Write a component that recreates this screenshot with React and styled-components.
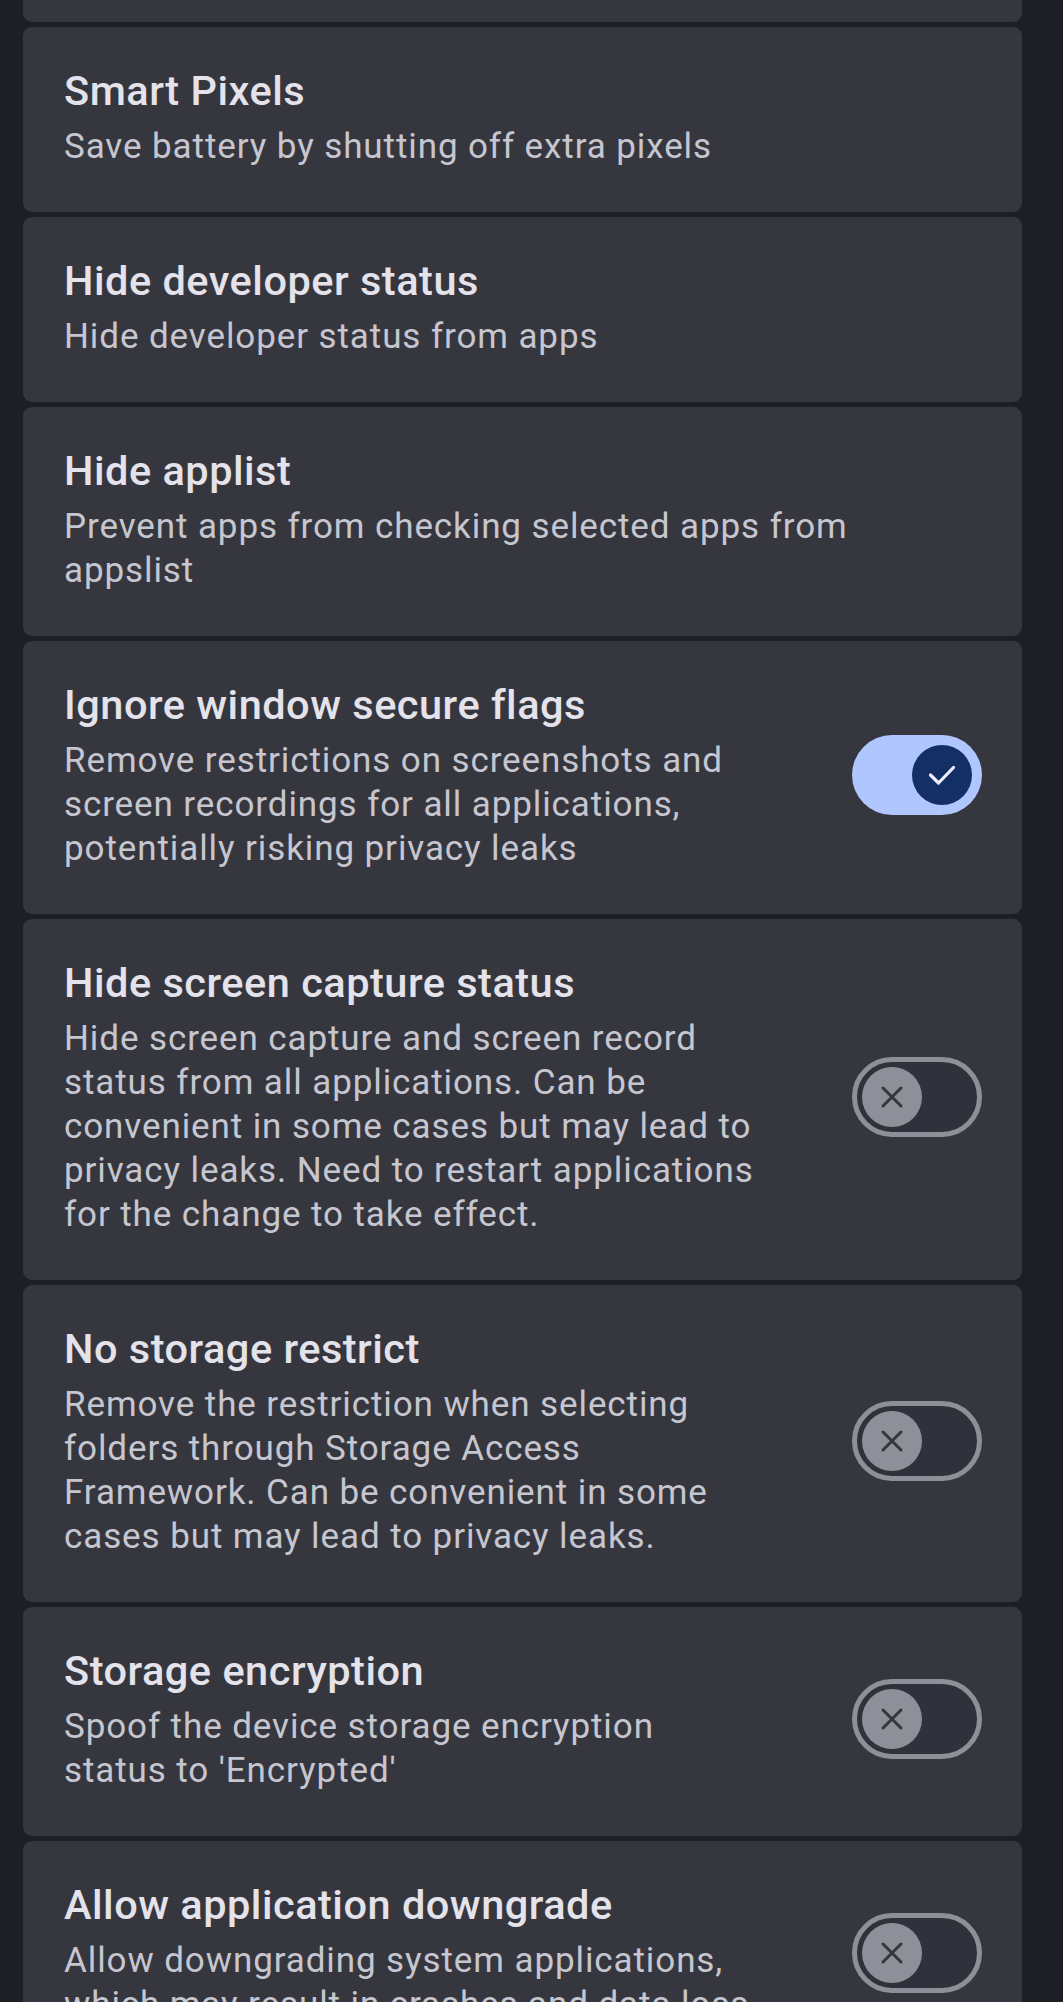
import React from "react";
import styled, { createGlobalStyle } from "styled-components";

const Global = createGlobalStyle`
  html, body {
    margin: 0;
    padding: 0;
    background: #1e1f25;
  }
  body {
    font-family: Roboto, "Noto Sans", sans-serif;
    -webkit-font-smoothing: antialiased;
  }
`;

const Page = styled.div`
  width: 1063px;
  min-height: 2002px;
  box-sizing: border-box;
  padding: 0 41px 0 23px;
  background: #1e1f25;
  display: flex;
  flex-direction: column;
  gap: 5px;
  overflow: hidden;
`;

const CardTail = styled.div`
  height: 22px;
  background: #36373e;
  border-radius: 0 0 9px 9px;
`;

const Card = styled.div`
  display: flex;
  align-items: center;
  background: #36373e;
  border-radius: 9px;
  padding: 38px 40px 43px 41px;
  flex-shrink: 0;
`;

const TextCol = styled.div`
  flex: 1;
  min-width: 0;
  display: flex;
  flex-direction: column;
`;

const Title = styled.div`
  font-size: 41.5px;
  line-height: 52px;
  font-weight: 500;
  color: #e4e2ea;
  margin-bottom: 8px;
  letter-spacing: 0.5px;
`;

const Desc = styled.div`
  font-size: 35px;
  line-height: 44px;
  font-weight: 400;
  color: #c6c6d0;
  letter-spacing: 0.9px;
`;

const Track = styled.div`
  width: 130px;
  height: 80px;
  box-sizing: border-box;
  margin-left: 88px;
  flex-shrink: 0;
  border-radius: 40px;
  display: flex;
  align-items: center;
  justify-content: ${(p) => (p.$on ? "flex-end" : "flex-start")};
  padding: 0 ${(p) => (p.$on ? "10px" : "5px")};
  background: ${(p) => (p.$on ? "#afc6ff" : "#30313a")};
  border: ${(p) => (p.$on ? "none" : "5px solid #8e9099")};
`;

const Thumb = styled.div`
  width: 60px;
  height: 60px;
  border-radius: 50%;
  display: flex;
  align-items: center;
  justify-content: center;
  background: ${(p) => (p.$on ? "#142e66" : "#8e9099")};
`;

const Switch = ({ on }) => (
  <Track $on={on}>
    <Thumb $on={on}>
      {on ? (
        <svg width="40" height="40" viewBox="0 0 40 40" fill="none">
          <path
            d="M8.5 20 L16.5 28 L31.5 12.5"
            stroke="#eef0ff"
            strokeWidth="3.2"
            strokeLinecap="round"
            strokeLinejoin="round"
          />
        </svg>
      ) : (
        <svg width="40" height="40" viewBox="0 0 40 40" fill="none">
          <path
            d="M11 11 L29 29 M29 11 L11 29"
            stroke="#35363d"
            strokeWidth="3"
            strokeLinecap="round"
          />
        </svg>
      )}
    </Thumb>
  </Track>
);

const items = [
  { title: "Smart Pixels", desc: "Save battery by shutting off extra pixels" },
  { title: "Hide developer status", desc: "Hide developer status from apps" },
  {
    title: "Hide applist",
    desc: "Prevent apps from checking selected apps from appslist",
  },
  {
    title: "Ignore window secure flags",
    desc: "Remove restrictions on screenshots and screen recordings for all applications, potentially risking privacy leaks",
    toggle: true,
    on: true,
  },
  {
    title: "Hide screen capture status",
    desc: "Hide screen capture and screen record status from all applications. Can be convenient in some cases but may lead to privacy leaks. Need to restart applications for the change to take effect.",
    toggle: true,
  },
  {
    title: "No storage restrict",
    desc: "Remove the restriction when selecting folders through Storage Access Framework. Can be convenient in some cases but may lead to privacy leaks.",
    toggle: true,
  },
  {
    title: "Storage encryption",
    desc: "Spoof the device storage encryption status to 'Encrypted'",
    toggle: true,
  },
  {
    title: "Allow application downgrade",
    desc: "Allow downgrading system applications, which may result in crashes and data loss",
    toggle: true,
  },
];

export default function App() {
  return (
    <>
      <Global />
      <Page>
        <CardTail />
        {items.map((it) => (
          <Card key={it.title}>
            <TextCol>
              <Title>{it.title}</Title>
              <Desc>{it.desc}</Desc>
            </TextCol>
            {it.toggle && <Switch on={it.on} />}
          </Card>
        ))}
      </Page>
    </>
  );
}
